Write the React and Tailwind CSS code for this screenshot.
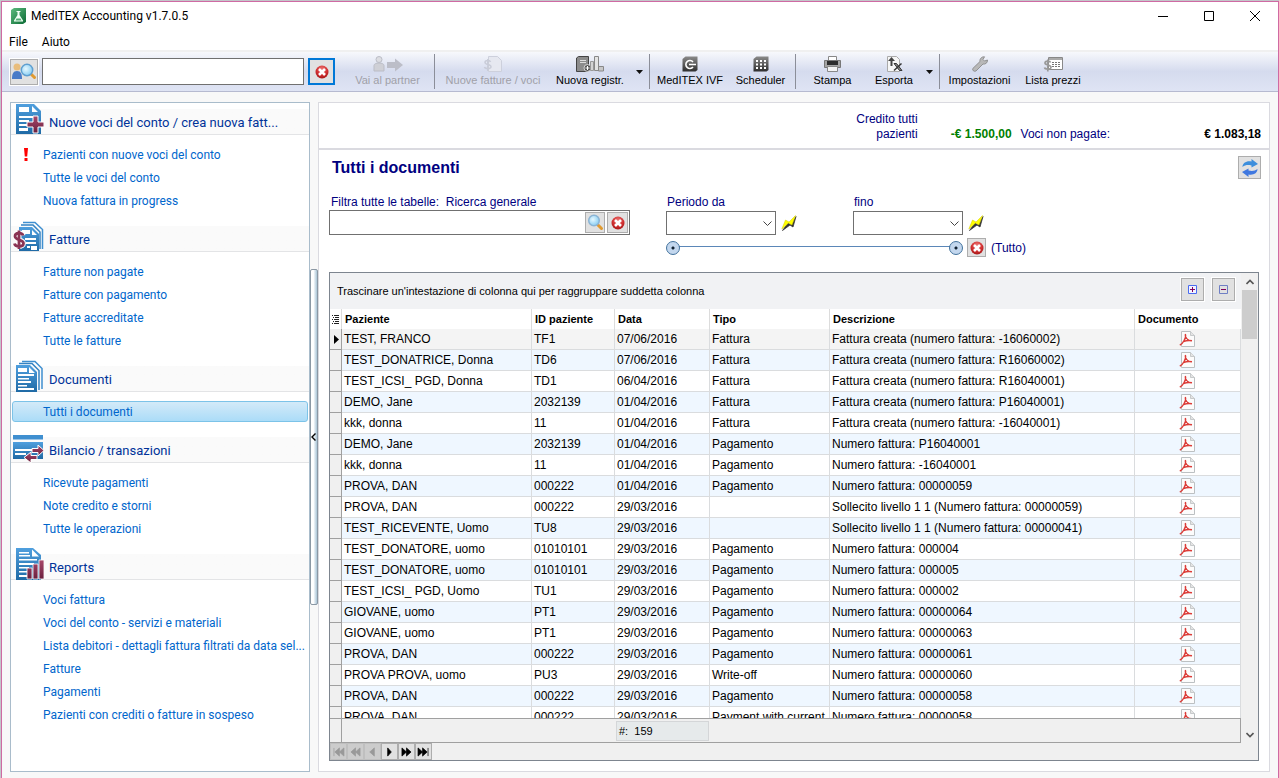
import { useState } from "react";
import clsx from "clsx";

const SECTIONS = [
  {
    title: "Nuove voci del conto / crea nuova fatt...",
    icon: "new",
    items: ["Pazienti con nuove voci del conto", "Tutte le voci del conto", "Nuova fattura in progress"],
    alert: "Pazienti con nuove voci del conto",
  },
  {
    title: "Fatture",
    icon: "invoice",
    items: ["Fatture non pagate", "Fatture con pagamento", "Fatture accreditate", "Tutte le fatture"],
  },
  { title: "Documenti", icon: "docs", items: ["Tutti i documenti"] },
  {
    title: "Bilancio / transazioni",
    icon: "balance",
    items: ["Ricevute pagamenti", "Note credito e storni", "Tutte le operazioni"],
  },
  {
    title: "Reports",
    icon: "reports",
    items: [
      "Voci fattura",
      "Voci del conto - servizi e materiali",
      "Lista debitori - dettagli fattura filtrati da data sel...",
      "Fatture",
      "Pagamenti",
      "Pazienti con crediti o fatture in sospeso",
    ],
  },
];

const ROWS = [
  ["TEST, FRANCO", "TF1", "07/06/2016", "Fattura", "Fattura creata (numero fattura: -16060002)"],
  ["TEST_DONATRICE, Donna", "TD6", "07/06/2016", "Fattura", "Fattura creata (numero fattura: R16060002)"],
  ["TEST_ICSI_ PGD, Donna", "TD1", "06/04/2016", "Fattura", "Fattura creata (numero fattura: R16040001)"],
  ["DEMO, Jane", "2032139", "01/04/2016", "Fattura", "Fattura creata (numero fattura: P16040001)"],
  ["kkk, donna", "11", "01/04/2016", "Fattura", "Fattura creata (numero fattura: -16040001)"],
  ["DEMO, Jane", "2032139", "01/04/2016", "Pagamento", "Numero fattura: P16040001"],
  ["kkk, donna", "11", "01/04/2016", "Pagamento", "Numero fattura: -16040001"],
  ["PROVA, DAN", "000222", "01/04/2016", "Pagamento", "Numero fattura: 00000059"],
  ["PROVA, DAN", "000222", "29/03/2016", "", "Sollecito livello 1 1 (Numero fattura: 00000059)"],
  ["TEST_RICEVENTE, Uomo", "TU8", "29/03/2016", "", "Sollecito livello 1 1 (Numero fattura: 00000041)"],
  ["TEST_DONATORE, uomo", "01010101", "29/03/2016", "Pagamento", "Numero fattura: 000004"],
  ["TEST_DONATORE, uomo", "01010101", "29/03/2016", "Pagamento", "Numero fattura: 000005"],
  ["TEST_ICSI_ PGD, Uomo", "TU1", "29/03/2016", "Pagamento", "Numero fattura: 000002"],
  ["GIOVANE, uomo", "PT1", "29/03/2016", "Pagamento", "Numero fattura: 00000064"],
  ["GIOVANE, uomo", "PT1", "29/03/2016", "Pagamento", "Numero fattura: 00000063"],
  ["PROVA, DAN", "000222", "29/03/2016", "Pagamento", "Numero fattura: 00000061"],
  ["PROVA PROVA, uomo", "PU3", "29/03/2016", "Write-off", "Numero fattura: 00000060"],
  ["PROVA, DAN", "000222", "29/03/2016", "Pagamento", "Numero fattura: 00000058"],
  ["PROVA, DAN", "000222", "29/03/2016", "Payment with current", "Numero fattura: 00000058"],
];

const HEADERS = ["Paziente", "ID paziente", "Data", "Tipo", "Descrizione", "Documento"];

function Gradients() {
  return (
    <svg width="0" height="0" className="absolute" aria-hidden="true">
      <defs>
        <linearGradient id="blue" x1="0" y1="0" x2="0" y2="1">
          <stop offset="0" stopColor="#4f9fde" />
          <stop offset="1" stopColor="#1f6aa5" />
        </linearGradient>
        <linearGradient id="wine" x1="0" y1="0" x2="0" y2="1">
          <stop offset="0" stopColor="#a8486c" />
          <stop offset="1" stopColor="#6a1f3d" />
        </linearGradient>
        <linearGradient id="steel" x1="0" y1="0" x2="0" y2="1">
          <stop offset="0" stopColor="#8a8a8a" />
          <stop offset="1" stopColor="#2e2e2e" />
        </linearGradient>
        <linearGradient id="green" x1="0" y1="0" x2="1" y2="1">
          <stop offset="0" stopColor="#5dbb7e" />
          <stop offset="1" stopColor="#0b6b35" />
        </linearGradient>
        <radialGradient id="red" cx="0.5" cy="0.3" r="0.7">
          <stop offset="0" stopColor="#ee7a78" />
          <stop offset="0.6" stopColor="#d02f30" />
          <stop offset="1" stopColor="#a81818" />
        </radialGradient>
        <radialGradient id="lens" cx="0.4" cy="0.4" r="0.7">
          <stop offset="0" stopColor="#e6f8ff" />
          <stop offset="1" stopColor="#7cc8f0" />
        </radialGradient>
      </defs>
    </svg>
  );
}

function SectionIcon({ name }) {
  if (name === "new") {
    return (
      <svg width="32" height="32" viewBox="0 0 32 32" className="shrink-0" aria-hidden="true">
        <path d="M4 1h18l7 7v23H4z" fill="url(#blue)" />
        <path d="M7 4h10v5H7zM20 3v6h6zM7 13h18v2H7zM7 17h10v2H7zM7 21h8v2H7zM7 25h9v3H7z" fill="#fff" />
        <path d="M21 13h5v6h6v5h-6v6h-5v-6h-6v-5h6z" fill="url(#wine)" stroke="#fff" />
      </svg>
    );
  }
  if (name === "invoice") {
    return (
      <svg width="32" height="32" viewBox="0 0 32 32" className="shrink-0" aria-hidden="true">
        <path d="M11 2.500h12l7.500 7V29" fill="none" stroke="#3f8fd0" strokeWidth="1.500" />
        <path d="M9 5h12l7 7v17" fill="none" stroke="#3483c2" strokeWidth="1.500" />
        <path d="M7 7h13l7 7v17H7z" fill="url(#blue)" />
        <path d="M10 10h8v4h-8zM20 10v5h5zM13 18h11v2H13zM14 22h10v2H14zM15 26h3v2h-3zM19 26h6v4h-6z" fill="#fff" />
        <path d="M11 15.500c-.5-3-8-3.500-8 .8 0 4.500 8.500 2.500 8.500 7 0 4.200-8.500 4-9 .2M7 10.500v18.500" fill="none" stroke="#fff" strokeWidth="5" />
        <path d="M11 15.500c-.5-3-8-3.500-8 .8 0 4.500 8.500 2.500 8.500 7 0 4.200-8.500 4-9 .2M7 10.500v18.500" fill="none" stroke="#8a3454" strokeWidth="2.800" />
      </svg>
    );
  }
  if (name === "docs") {
    return (
      <svg width="32" height="32" viewBox="0 0 32 32" className="shrink-0" aria-hidden="true">
        <path d="M10 1.500h13l7 7V29" fill="none" stroke="#3f8fd0" strokeWidth="1.500" />
        <path d="M7 3.500h13l7 7V30" fill="none" stroke="#3483c2" strokeWidth="1.500" />
        <path d="M4 5h14l7 7v20H4z" fill="url(#blue)" />
        <path d="M6 8h9v4H6zM17 7v6h6zM6 14h16v2H6zM6 18h11v1.500H6zM6 21h13v2H6zM6 25h9v1.500H6zM6 28h16v2H6z" fill="#fff" />
      </svg>
    );
  }
  if (name === "balance") {
    return (
      <svg width="32" height="32" viewBox="0 0 32 32" className="shrink-0" aria-hidden="true">
        <path d="M1 4h30v4.500H1z" fill="#3f8fd0" />
        <path d="M1 11h30v17H1z" fill="url(#blue)" />
        <path d="M3 18h17v2H3zM3 22h11v2H3z" fill="#fff" />
        <path d="M20 17.500h6V14l6 5.500-6 5.500v-3.500h-6z" fill="url(#wine)" stroke="#fff" />
        <path d="M25 24.500h-6V21l-7 5.500 7 5.500v-3.500h6z" fill="url(#wine)" stroke="#fff" />
      </svg>
    );
  }
  return (
    <svg width="32" height="32" viewBox="0 0 32 32" className="shrink-0" aria-hidden="true">
      <path d="M4 0h17l8 7v25H4z" fill="url(#blue)" />
      <path d="M20 1.500v7h7zM7 4h10v1.500H7zM7 7h11v1.500H7zM7 11h18v1.500H7zM7 15h15v2H7zM7 19h10v1.500H7zM7 23h8v1.500H7zM7 27h8v2H7z" fill="#fff" />
      <path d="M15 20h5v11h-5zM21 16h5v15h-5zM27 12h5v19h-5z" fill="url(#wine)" stroke="#fff" strokeWidth="0.800" />
    </svg>
  );
}

function AppIcon() {
  return (
    <svg width="16" height="16" viewBox="0 0 16 16" aria-hidden="true">
      <path d="M1 2l3-2h12v14l-3 2H1z" fill="url(#green)" />
      <path d="M6.500 3h4v1h-1v3l3.500 5.500v1H4v-1L7.500 7V4h-1z" fill="#f2fff6" />
      <path d="M6.500 10.500h4l1 2h-6z" fill="#4fae72" />
    </svg>
  );
}

function RedCross({ size = 14 }) {
  return (
    <svg width={size} height={size} viewBox="0 0 14 14" aria-hidden="true">
      <circle cx="7" cy="7" r="6.500" fill="url(#red)" />
      <path d="M4 4l6 6M10 4l-6 6" stroke="#fff" strokeWidth="2.600" />
    </svg>
  );
}

function Magnifier() {
  return (
    <svg width="17" height="17" viewBox="0 0 17 17" aria-hidden="true">
      <path d="M11 11l3.500 3.500" stroke="#e09a30" strokeWidth="3" strokeLinecap="round" />
      <circle cx="7" cy="6.500" r="5.300" fill="url(#lens)" stroke="#8cb4d4" strokeWidth="1.500" />
    </svg>
  );
}

function PersonSearch() {
  return (
    <svg width="26" height="20" viewBox="0 0 26 20" aria-hidden="true">
      <circle cx="6" cy="5" r="3.500" fill="#e8bd7c" />
      <path d="M1 17c0-5 1-8 5-8s5 3 5 8z" fill="#4a7cc8" />
      <path d="M20.500 12.500l3 3" stroke="#e09a30" strokeWidth="3" strokeLinecap="round" />
      <circle cx="16" cy="8" r="5.700" fill="url(#lens)" stroke="#5f9fd0" strokeWidth="1.500" />
    </svg>
  );
}

function Lightning() {
  return (
    <svg width="16" height="16" viewBox="0 0 16 16" aria-hidden="true">
      <path d="M1.500 15.500L7 8l3 2 5-8.500-3 10.500-3-2z" fill="#333" stroke="#333" strokeWidth="0.800" />
      <path d="M0.800 14L4.500 5l3.500 2 6.500-6.500-3.500 9.500-3.500-2z" fill="#ffff00" stroke="#d4cc00" strokeWidth="0.500" />
    </svg>
  );
}

function PdfIcon() {
  return (
    <svg width="16" height="16" viewBox="0 0 16 16" className="mx-auto" aria-hidden="true">
      <path d="M2.500 0.500h9l4 4v11h-13z" fill="#fcfcfc" stroke="#bcc0c2" />
      <path d="M11.500 0.500v4h4" fill="#e4e4e4" stroke="#bcc0c2" strokeWidth="0.800" />
      <path d="M6.300 3c.8 2 .3 4-1.200 6.500C3.800 12 2.200 13.500 0.800 14.200M6.200 4c.3 2.300 2 4.500 3.800 5.800M4.500 10.500C7 9.500 9.800 9.200 13 9.700" fill="none" stroke="#dc3c38" strokeWidth="1.400" />
    </svg>
  );
}

function RefreshIcon() {
  return (
    <svg width="18" height="18" viewBox="0 0 18 18" aria-hidden="true">
      <path d="M1.500 8c0-4 4-6.500 9-5.500V0l6.500 5-6.500 3.500V6.500C7 5.500 4 6 1.500 8z" fill="#3c8edc" />
      <path d="M16.500 10c0 4-4 6.500-9 5.500V18L1 13l6.500-3.500v2c3.500 1 6.500.5 9-1.500z" fill="#3f78e0" />
    </svg>
  );
}

function PartnerIcon() {
  return (
    <svg width="32" height="16" viewBox="0 0 32 16" aria-hidden="true">
      <circle cx="7" cy="3.500" r="3" fill="#dcdde2" stroke="#bbbdc6" />
      <path d="M2 15V9.500C2 8 4 7 7 7s5 1 5 2.500V15z" fill="#cfd0d6" stroke="#bbbdc6" />
      <path d="M15 6h8V2.500L31 9l-8 6.500V12h-8z" fill="#bcbec8" />
    </svg>
  );
}

function NewInvoiceIcon() {
  return (
    <svg width="20" height="16" viewBox="0 0 20 16" aria-hidden="true">
      <path d="M5.500 0.500h9l4 4v11h-13z" fill="#e6e8f0" stroke="#cdd0dc" />
      <path d="M7.500 6C7 4 2 4 2 6.500s6 1.500 6 4.200S2 13 1.500 11M4.800 3v12" fill="none" stroke="#c9ccd8" strokeWidth="1.500" />
    </svg>
  );
}

function RegisterIcon() {
  return (
    <svg width="28" height="16" viewBox="0 0 28 16" aria-hidden="true">
      <path d="M0.500 2l2-1.500h10V14l-1 1.500h-11z" fill="#8c8c8c" stroke="#444" />
      <path d="M4 4.500h6M4 6.500h6" stroke="#ddd" />
      <circle cx="11.500" cy="12" r="3.500" fill="#555" stroke="#eee" strokeWidth="0.800" />
      <path d="M9.500 12h4M11.500 10v4" stroke="#fff" />
      <path d="M14.500 5.500h3v9h-3z" fill="#d4d4d4" stroke="#999" />
      <path d="M18.500 0.500h4v14h-4z" fill="#e4e4e4" stroke="#888" />
      <path d="M22.500 10.500h5v4.500h-5z" fill="#c8c8c8" stroke="#888" />
    </svg>
  );
}

function IvfIcon() {
  return (
    <svg width="16" height="16" viewBox="0 0 16 16" aria-hidden="true">
      <path d="M0.500 3l3-2.500h12V14l-2 1.500h-13z" fill="url(#steel)" />
      <path d="M11 6a4 4 0 1 0 0 5M7 8.500h7" fill="none" stroke="#fff" strokeWidth="1.600" />
    </svg>
  );
}

function SchedulerIcon() {
  return (
    <svg width="16" height="16" viewBox="0 0 16 16" aria-hidden="true">
      <path d="M0.500 3l3-2.500h12V14l-2 1.500h-13z" fill="url(#steel)" />
      <path d="M3 4h2v2H3zM7 4h2v2H7zM11 4h2v2h-2zM3 7.500h2v2H3zM7 7.500h2v2H7zM11 7.500h2v2h-2zM3 11h2v2H3zM7 11h2v2H7zM11 11h2v2h-2z" fill="#fff" />
    </svg>
  );
}

function PrinterIcon() {
  return (
    <svg width="17" height="16" viewBox="0 0 17 16" aria-hidden="true">
      <path d="M4.500 0.500h8v5h-8z" fill="#fff" stroke="#888" />
      <path d="M0.500 4.500h16v7h-16z" fill="#a4a4a4" stroke="#777" />
      <path d="M3 5h11v4H3z" fill="#2c2c2c" />
      <path d="M3.500 10.500h10v5h-10z" fill="#f4f4f4" stroke="#888" />
    </svg>
  );
}

function ExportIcon() {
  return (
    <svg width="17" height="16" viewBox="0 0 17 16" aria-hidden="true">
      <path d="M1.500 0.500h9l3 3v12h-12z" fill="#f6f6f6" stroke="#aaa" />
      <path d="M4.500 10V5H2l3.500-4L9 5H6.500v5z" fill="#444" />
      <path d="M8 7.500h2.500l5.500 7h-2.500z" fill="#888" stroke="#333" />
      <path d="M15.500 7.500L8 14.500" stroke="#333" strokeWidth="1.400" />
    </svg>
  );
}

function WrenchIcon() {
  return (
    <svg width="16" height="16" viewBox="0 0 16 16" aria-hidden="true">
      <path d="M0.800 12.500l7.200-7C7.500 3 9.500 0.500 12.500 0.800l-1.500 2.700 1.500 1.500 3-1c0 3-2 4.500-4.500 4L4 15c-2 1-4-.8-3.200-2.500z" fill="#b8b8b8" stroke="#8a8a8a" strokeWidth="0.900" />
    </svg>
  );
}

function PriceListIcon() {
  return (
    <svg width="20" height="16" viewBox="0 0 20 16" aria-hidden="true">
      <path d="M5.500 1.500h14v12h-14z" fill="#fff" stroke="#888" />
      <path d="M6 2h13v2H6z" fill="#aaa" />
      <path d="M9 6.500h9M9 8.500h9M9 10.500h9" stroke="#777" strokeDasharray="2 1" />
      <path d="M7.500 6.500C7 4.500 2 4.500 2 7s6 1.500 6 4.200-6 2.300-6.500.3M4.800 3.500v12" fill="none" stroke="#999" strokeWidth="1.700" />
    </svg>
  );
}

function ToolButton({ icon, label, className, disabled }) {
  return (
    <button
      type="button"
      disabled={disabled}
      className={clsx("flex h-full shrink-0 flex-col items-center pt-1 text-[11px] leading-4 whitespace-nowrap", className, disabled && "text-[#a0a0a8]")}
    >
      {icon}
      <span>{label}</span>
    </button>
  );
}

function DropArrow({ label }) {
  return (
    <button type="button" aria-label={label} className="flex w-5 shrink-0 items-center justify-center">
      <svg width="7" height="4" viewBox="0 0 7 4" aria-hidden="true">
        <path d="M0 0h7L3.500 4z" fill="#111" />
      </svg>
    </button>
  );
}

function Separator() {
  return <div className="my-[2px] w-px shrink-0 bg-[#8b8e99]" />;
}

function TitleBar() {
  return (
    <header className="flex h-7 shrink-0 items-center justify-between pl-2">
      <div className="flex items-center gap-[5px]">
        <AppIcon />
        <h1>MedITEX Accounting v1.7.0.5</h1>
      </div>
      <div className="flex">
        <button type="button" aria-label="Minimize" className="flex w-[46px] items-center justify-center">
          <svg width="10" height="10" viewBox="0 0 10 10"><path d="M0 5.500h10" stroke="#000" /></svg>
        </button>
        <button type="button" aria-label="Maximize" className="flex w-[46px] items-center justify-center">
          <svg width="10" height="10" viewBox="0 0 10 10"><path d="M0.500 0.500h9v9h-9z" fill="none" stroke="#000" /></svg>
        </button>
        <button type="button" aria-label="Close" className="flex w-[46px] items-center justify-center">
          <svg width="10" height="10" viewBox="0 0 10 10"><path d="M0 0l10 10M10 0L0 10" stroke="#000" /></svg>
        </button>
      </div>
    </header>
  );
}

function Toolbar() {
  return (
    <div className="flex h-[42px] shrink-0 border-t-2 border-b border-t-[#f0f0f0] border-b-[#b6bad0] bg-linear-to-b from-[#f7f8fc] via-[#d5dbee] to-[#dfe4f4] pl-2 font-['Liberation_Sans',Arial,sans-serif]">
      <div className="flex shrink-0 items-center gap-1">
        <button type="button" aria-label="Cerca paziente" className="flex h-[26px] w-[28px] items-center justify-center border border-[#adadad] bg-[#e1e1e1] outline outline-white">
          <PersonSearch />
        </button>
        <input type="text" aria-label="Paziente" className="h-[27px] w-[262px] border border-[#707070] bg-white px-1" />
        <button type="button" aria-label="Cancella" className="flex size-[27px] items-center justify-center border-2 border-[#0078d7] bg-[#e1e1e1]">
          <RedCross />
        </button>
      </div>
      <ToolButton icon={<PartnerIcon />} label="Vai al partner" className="w-[99px] pl-[6px]" disabled />
      <Separator />
      <ToolButton icon={<NewInvoiceIcon />} label="Nuove fatture / voci" className="w-[116px]" disabled />
      <ToolButton icon={<RegisterIcon />} label="Nuova registr." className="w-[78px]" />
      <DropArrow label="Altre registrazioni" />
      <Separator />
      <ToolButton icon={<IvfIcon />} label="MedITEX IVF" className="w-[80px]" />
      <ToolButton icon={<SchedulerIcon />} label="Scheduler" className="w-[65px] pr-1" />
      <Separator />
      <ToolButton icon={<PrinterIcon />} label="Stampa" className="w-[73px]" />
      <ToolButton icon={<ExportIcon />} label="Esporta" className="w-[50px]" />
      <DropArrow label="Altri formati" />
      <Separator />
      <ToolButton icon={<WrenchIcon />} label="Impostazioni" className="w-[79px]" />
      <ToolButton icon={<PriceListIcon />} label="Lista prezzi" className="w-[68px]" />
    </div>
  );
}

function Sidebar({ selected, onSelect }) {
  return (
    <nav className="w-[300px] shrink-0 overflow-hidden border border-[#a9bccb] bg-white">
      {SECTIONS.map((section, i) => (
        <section key={section.title} className={clsx(i > 0 && "mt-2")}>
          <h2 className="flex h-8 items-center gap-[5px] border-b border-[#e3e4e6] bg-linear-to-b from-white from-20% to-[#fafafa] to-20% pl-px text-[13px] text-[#003399]">
            <SectionIcon name={section.icon} />
            <span className="truncate pt-2">{section.title}</span>
          </h2>
          <ul className="pt-2">
            {section.items.map((item) => {
              const active = section.title === "Documenti" && item === selected;
              return (
                <li key={item} className="h-[23px] p-px">
                  <a
                    href="#"
                    onClick={(e) => {
                      e.preventDefault();
                      onSelect(item);
                    }}
                    className={clsx(
                      "flex h-[21px] items-center rounded-[3px] border text-[#0066cc]",
                      active ? "border-[#7cc3e8] bg-linear-to-b from-[#d3eaf8] to-[#abdcf8]" : "border-transparent"
                    )}
                  >
                    <span className="w-[30px] shrink-0 pl-[10px]">
                      {section.alert === item && (
                        <svg width="6" height="13" viewBox="0 0 6 13" aria-label="Attenzione">
                          <path d="M1 0h4l-.8 8.500H1.800zM1.500 10h3v3h-3z" fill="#f00" />
                        </svg>
                      )}
                    </span>
                    <span className="whitespace-nowrap">{item}</span>
                  </a>
                </li>
              );
            })}
          </ul>
        </section>
      ))}
    </nav>
  );
}

function DateSelect({ id, label }) {
  return (
    <div>
      <label htmlFor={id} className="block pl-px leading-4">{label}</label>
      <div className="mt-px flex items-center gap-[5px]">
        <div className="relative">
          <select id={id} className="block h-6 w-[110px] appearance-none border border-[#707070] bg-white px-1" />
          <svg width="9" height="5" viewBox="0 0 9 5" className="pointer-events-none absolute top-[10px] right-1" aria-hidden="true">
            <path d="M0.500 0.500l4 4 4-4" fill="none" stroke="#444" />
          </svg>
        </div>
        <button type="button" aria-label={`Imposta ${label}`}>
          <Lightning />
        </button>
      </div>
    </div>
  );
}

function RangeThumb({ label, value }) {
  return (
    <input
      type="range"
      aria-label={label}
      defaultValue={value}
      className="pointer-events-none absolute inset-0 h-[15px] w-full appearance-none bg-transparent [&::-webkit-slider-thumb]:pointer-events-auto [&::-webkit-slider-thumb]:size-[14px] [&::-webkit-slider-thumb]:appearance-none [&::-webkit-slider-thumb]:rounded-full [&::-webkit-slider-thumb]:border [&::-webkit-slider-thumb]:border-[#41719c] [&::-webkit-slider-thumb]:bg-[radial-gradient(circle,#123_0_1px,#c3d7ee_2px)]"
    />
  );
}

function Filters() {
  return (
    <div className="flex items-start px-[10px] pt-[14px] text-[12px] text-[#000080]">
      <div className="w-[301px] shrink-0">
        <label htmlFor="general" className="block pl-[2px] leading-4 whitespace-pre">Filtra tutte le tabelle:  Ricerca generale</label>
        <div className="flex h-[25px] items-center gap-[2px] border border-[#707070] bg-white pr-px">
          <input id="general" type="text" className="h-full min-w-0 flex-1 px-1 outline-none" />
          <button type="button" aria-label="Cerca" className="flex h-[21px] w-5 items-center justify-center border border-[#adadad] bg-[#e1e1e1]">
            <Magnifier />
          </button>
          <button type="button" aria-label="Cancella filtro" className="flex size-[21px] items-center justify-center border border-[#adadad] bg-[#e1e1e1]">
            <RedCross />
          </button>
        </div>
      </div>
      <div className="ml-9">
        <div className="flex gap-14">
          <DateSelect id="from" label="Periodo da" />
          <DateSelect id="to" label="fino" />
        </div>
        <div className="mt-[3px] flex items-center gap-1">
          <div className="relative h-[15px] w-[297px]">
            <div className="mx-[7px] h-[7px] border-b border-[#5b87b8]" />
            <RangeThumb label="Inizio periodo" value={0} />
            <RangeThumb label="Fine periodo" value={100} />
          </div>
          <button type="button" aria-label="Azzera periodo" className="flex size-[19px] items-center justify-center border border-[#adadad] bg-[#e1e1e1]">
            <RedCross />
          </button>
          <span className="pl-px">(Tutto)</span>
        </div>
      </div>
    </div>
  );
}

function GroupButton({ plus }) {
  return (
    <button type="button" aria-label={plus ? "Espandi tutto" : "Comprimi tutto"} className="flex size-[23px] items-center justify-center border border-[#adadad] bg-[#e1e1e1] outline outline-white">
      <svg width="9" height="9" viewBox="0 0 9 9" aria-hidden="true">
        <path d="M0.500 0.500h8v8h-8z" fill={plus ? "#f4f4ff" : "#e1e1e1"} stroke={plus ? "#4a6cf0" : "#6f7fc4"} />
        <path d="M2 4.500h5" stroke="#800060" />
        {plus && <path d="M4.500 2v5" stroke="#800060" />}
      </svg>
    </button>
  );
}

function ColumnWidths() {
  return (
    <colgroup>
      <col className="w-[12px]" />
      <col className="w-[190px]" />
      <col className="w-[83px]" />
      <col className="w-[95px]" />
      <col className="w-[120px]" />
      <col />
      <col className="w-[106px]" />
    </colgroup>
  );
}

function DocumentTable() {
  return (
    <table className="w-full table-fixed border-separate border-spacing-0 text-left whitespace-nowrap text-black">
      <ColumnWidths />
      <thead>
        <tr className="h-5 text-[11px]">
          <th aria-label="Indicatore" className="border-r border-[#dcdcdc] p-0">
            <svg width="7" height="9" viewBox="0 0 7 9" className="ml-[2px]" aria-hidden="true">
              <path d="M0 .5h1M2 .5h5M1 2.500h1M3 2.500h4M0 4.500h1M2 4.500h5M1 6.500h1M3 6.500h4M0 8.500h1M2 8.500h5" stroke="#222" />
            </svg>
          </th>
          {HEADERS.map((h) => (
            <th key={h} className="border-r border-[#dcdcdc] px-[3px] py-0 leading-4 last:border-r-0">{h}</th>
          ))}
        </tr>
      </thead>
      <tbody className="text-[12px]">
        {ROWS.map((row, i) => (
          <tr key={i} className={clsx("h-[21px]", i === 0 ? "bg-[#f4f4f4]" : i % 2 ? "bg-[#eff7ff]" : "bg-white")}>
            <td className="border-r border-b border-[#a0a0a0] bg-[#f0f0f0] p-0">
              {i === 0 && (
                <svg width="5" height="9" viewBox="0 0 5 9" className="ml-1" aria-label="Riga corrente">
                  <path d="M0 0l5 4.500L0 9z" fill="#000" />
                </svg>
              )}
            </td>
            {row.map((cell, j) => (
              <td key={j} className="overflow-hidden border-r border-b border-[#dadcde] px-[2px] py-0 leading-4">{cell}</td>
            ))}
            <td className="border-r border-b border-[#dadcde] py-0 pr-[2px] pl-0">
              <a href="#" aria-label="Apri PDF" className="block"><PdfIcon /></a>
            </td>
          </tr>
        ))}
      </tbody>
    </table>
  );
}

const NAV_BUTTONS = [
  { label: "Primo", d: "M2 1v9M8 1v9L3 5.500zM13 1v9L8 5.500z", off: true },
  { label: "Pagina precedente", d: "M7 1v9L2 5.500zM12 1v9L7 5.500z", off: true },
  { label: "Precedente", d: "M9 1v9L4 5.500z", off: true },
  { label: "Successivo", d: "M5 1v9l4-4.500z" },
  { label: "Pagina successiva", d: "M2 1v9l5-4.500zM7 1v9l5-4.500z" },
  { label: "Ultimo", d: "M1 1v9l5-4.500zM6 1v9l5-4.500zM12 1v9" },
];

function Navigator() {
  return (
    <div className="flex h-[17px] shrink-0 bg-[#f0f0f0]">
      {NAV_BUTTONS.map(({ label, d, off }) => (
        <button
          key={label}
          type="button"
          aria-label={label}
          disabled={off}
          className={clsx("flex w-[17px] items-center justify-center border", off ? "border-[#bfbfbf] bg-[#cccccc]" : "border-[#adadad] bg-[#e1e1e1]")}
        >
          <svg width="13" height="10" viewBox="0 0 14 11" className="shrink-0" aria-hidden="true">
            <path d={d} fill={off ? "#999" : "#000"} stroke={off ? "#999" : "#000"} strokeWidth="0.800" />
          </svg>
        </button>
      ))}
    </div>
  );
}

function DocumentGrid() {
  return (
    <div className="mx-[10px] mt-[15px] mb-[10px] flex min-h-0 flex-1 flex-col border border-[#7d858f] bg-white">
      <div className="flex min-h-0 flex-1">
        <div className="flex min-w-0 flex-1 flex-col">
          <div className="flex h-9 shrink-0 items-center justify-between bg-[#f1f2f4] pr-[6px] pl-[7px] text-[11px] text-black">
            <span>Trascinare un'intestazione di colonna qui per raggruppare suddetta colonna</span>
            <div className="flex gap-2 pb-1">
              <GroupButton plus />
              <GroupButton />
            </div>
          </div>
          <div className="min-h-0 flex-1 overflow-hidden">
            <DocumentTable />
          </div>
          <div className="flex h-[25px] shrink-0 border-t border-r border-b border-[#a0a0a0] bg-[#f0f0f0] text-[11px] text-black">
            <div className="w-3 border-r border-[#a0a0a0]" />
            <div className="mt-[2px] ml-[274px] h-5 w-[93px] border border-[#d4d6d8] bg-[#e6eaeb] pl-[2px] leading-[18px] whitespace-pre">#:  159</div>
          </div>
        </div>
        <div className="flex w-[17px] shrink-0 flex-col items-center bg-[#f0f0f0]">
          <div className="flex h-[17px] items-center">
            <svg width="8" height="6" viewBox="0 0 8 6" aria-hidden="true"><path d="M0.500 5L4 1.500 7.500 5" fill="none" stroke="#555" strokeWidth="1.600" /></svg>
          </div>
          <div className="h-[49px] w-[15px] bg-[#cdcdcd]" />
          <div className="mt-auto flex h-[17px] items-center">
            <svg width="8" height="6" viewBox="0 0 8 6" aria-hidden="true"><path d="M0.500 1L4 4.500 7.500 1" fill="none" stroke="#555" strokeWidth="1.600" /></svg>
          </div>
        </div>
      </div>
      <Navigator />
    </div>
  );
}

export default function App() {
  const [selected, setSelected] = useState("Tutti i documenti");

  return (
    <div className="h-screen bg-[#c3c5c9] pt-px pl-px">
      <Gradients />
      <div className="flex h-full flex-col overflow-hidden border-x border-t border-[#cf6aa3] bg-white font-['Roboto','Noto_Sans',sans-serif] text-[12px] text-black">
        <TitleBar />
        <div className="flex h-5 shrink-0 items-center gap-[14px] pt-1 pl-[7px]">
          <button type="button">File</button>
          <button type="button">Aiuto</button>
        </div>
        <Toolbar />
        <main className="flex min-h-0 flex-1 bg-[#f8f8f8] pt-[10px] pr-2 pb-[6px] pl-2">
          <Sidebar selected={selected} onSelect={setSelected} />
          <div className="flex w-2 shrink-0 items-center">
            <button type="button" aria-label="Chiudi pannello" className="flex h-[336px] w-2 items-center rounded-[2px] border border-[#8b98a4] bg-linear-to-r from-white from-40% to-[#a9c4d6]">
              <svg width="5" height="8" viewBox="0 0 5 8" aria-hidden="true"><path d="M4.500 0.500L1 4l3.500 3.500" fill="none" stroke="#000" strokeWidth="1.400" /></svg>
            </button>
          </div>
          <div className="flex min-w-0 flex-1 flex-col border border-[#dadae0] bg-white font-['Liberation_Sans',Arial,sans-serif]">
            <div className="flex h-[47px] shrink-0 items-end justify-end border-b-2 border-[#dadae0] pr-2 pb-[6px] text-[12px] leading-[15px] text-[#000080]">
              <span className="w-[70px] text-right">Credito tutti pazienti</span>
              <b className="w-[94px] text-right text-[#008000]">-€ 1.500,00</b>
              <span className="ml-[9px]">Voci non pagate:</span>
              <b className="w-[151px] text-right text-black">€ 1.083,18</b>
            </div>
            <div className="flex shrink-0 items-start justify-between pt-[6px] pr-2 pl-[13px]">
              <h2 className="text-[16px] leading-6 font-bold text-[#000080]">Tutti i documenti</h2>
              <button type="button" aria-label="Aggiorna" className="flex size-[23px] items-center justify-center border border-[#adadad] bg-[#e1e1e1]">
                <RefreshIcon />
              </button>
            </div>
            <Filters />
            <DocumentGrid />
          </div>
        </main>
      </div>
    </div>
  );
}
